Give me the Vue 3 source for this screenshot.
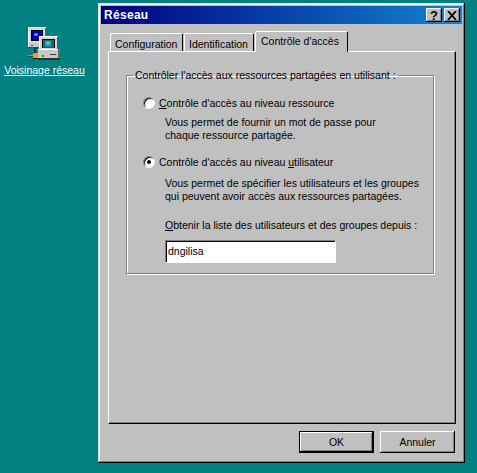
<template>
  <div class="desktop">
    <div class="desk-icon">
      <svg class="net-icon" width="33" height="33" viewBox="0 0 33 33" shape-rendering="crispEdges">
        <!-- back computer -->
        <rect x="0" y="0" width="18" height="16" fill="#d8d8d8" />
        <rect x="0" y="0" width="18" height="1" fill="#fff" />
        <rect x="0" y="0" width="1" height="20" fill="#fff" />
        <rect x="17" y="1" width="1" height="15" fill="#606060" />
        <rect x="3" y="3" width="12" height="11" fill="#000" />
        <rect x="4" y="4" width="10" height="9" fill="#0000b8" />
        <rect x="6" y="6" width="4" height="3" fill="#3060e0" />
        <rect x="7" y="7" width="2" height="1" fill="#b0e0ff" />
        <rect x="1" y="16" width="13" height="4" fill="#c8c8c8" />
        <rect x="3" y="18" width="2" height="1" fill="#00a000" />
        <rect x="0" y="20" width="14" height="1" fill="#404040" />
        <!-- cable -->
        <rect x="6" y="21" width="2" height="6" fill="#303030" />
        <rect x="0" y="28" width="12" height="1" fill="#b09850" />
        <rect x="0" y="29" width="12" height="1" fill="#404040" />
        <rect x="5" y="26" width="5" height="5" fill="#f0a000" />
        <rect x="5" y="31" width="5" height="1" fill="#202020" />
        <!-- front computer -->
        <rect x="11" y="9" width="19" height="13" fill="#d8d8d8" />
        <rect x="11" y="9" width="19" height="1" fill="#fff" />
        <rect x="11" y="9" width="1" height="13" fill="#fff" />
        <rect x="29" y="10" width="1" height="12" fill="#505050" />
        <rect x="14" y="12" width="13" height="9" fill="#000" />
        <rect x="15" y="13" width="11" height="8" fill="#106c74" />
        <rect x="17" y="14" width="6" height="5" fill="#40a0a8" />
        <rect x="19" y="15" width="2" height="2" fill="#80d8d8" />
        <rect x="10" y="22" width="22" height="9" fill="#c8c8c8" />
        <rect x="10" y="22" width="22" height="1" fill="#fff" />
        <rect x="10" y="31" width="22" height="2" fill="#303030" />
        <rect x="30" y="20" width="2" height="11" fill="#686868" />
        <rect x="14" y="28" width="2" height="2" fill="#00c000" />
        <rect x="22" y="27" width="6" height="1" fill="#404040" />
      </svg>
      <span class="desk-label">Voisinage réseau</span>
    </div>

    <div class="window">
      <div class="titlebar">
        <span class="title">Réseau</span>
        <div class="title-btns">
          <button class="title-btn help">?</button>
          <button class="title-btn close">
            <svg width="10" height="9" viewBox="0 0 10 9">
              <path d="M1 0 L9 9 M9 0 L1 9" stroke="#000" stroke-width="1.8" fill="none" />
            </svg>
          </button>
        </div>
      </div>

      <div class="content">
        <div class="tabs">
          <div class="tab tab-config">Configuration</div>
          <div class="tab tab-ident">Identification</div>
          <div class="tab active">Contrôle d'accès</div>
        </div>

        <div class="page">
          <fieldset class="group">
            <legend>Contrôler l'accès aux ressources partagées en utilisant :</legend>

            <label class="radio-row" @click="mode = 'res'">
              <span class="radio" :class="{ on: mode === 'res' }"></span>
              <span><u>C</u>ontrôle d'accès au niveau ressource</span>
            </label>
            <p class="desc">Vous permet de fournir un mot de passe pour<br />chaque ressource partagée.</p>

            <label class="radio-row second" @click="mode = 'user'">
              <span class="radio" :class="{ on: mode === 'user' }"></span>
              <span>Contrôle d'accès au niveau <u>u</u>tilisateur</span>
            </label>
            <p class="desc desc-user">Vous permet de spécifier les utilisateurs et les groupes<br />qui peuvent avoir accès aux ressources partagées.</p>

            <p class="desc source"><u>O</u>btenir la liste des utilisateurs et des groupes depuis :</p>
            <input class="field" v-model="source" />
          </fieldset>
        </div>

        <div class="buttons">
          <button class="btn default">OK</button>
          <button class="btn">Annuler</button>
        </div>
      </div>
    </div>
  </div>
</template>

<script setup>
import { ref } from 'vue'

const mode = ref('user')
const source = ref('dngilisa')
</script>

<style>
html, body {
  margin: 0;
  background: #008080;
  overflow: hidden;
}
</style>

<style scoped>
.desktop {
  position: relative;
  width: 477px;
  height: 473px;
  background: #008080;
  font-family: "Liberation Sans", Arial, sans-serif;
  font-size: 10.5px;
  color: #000;
  overflow: hidden;
}

.desk-icon {
  position: absolute;
  left: 0;
  top: 27px;
  width: 89px;
  display: flex;
  flex-direction: column;
  align-items: center;
}

.desk-label {
  margin-top: 3px;
  color: #fff;
  text-decoration: underline;
  line-height: 14px;
  white-space: nowrap;
}

.window {
  position: absolute;
  left: 98px;
  top: 3px;
  width: 367px;
  height: 460px;
  box-sizing: border-box;
  padding: 3px;
  background: #c0c0c0;
  display: flex;
  flex-direction: column;
  box-shadow: inset -1px -1px 0 #000, inset 1px 1px 0 #dfdfdf, inset -2px -2px 0 #808080, inset 2px 2px 0 #fff;
}

.titlebar {
  height: 18px;
  flex: none;
  display: flex;
  align-items: center;
  justify-content: space-between;
  padding: 0 2px 0 3px;
  background: linear-gradient(to right, #000080, #1084d0);
}

.title {
  color: #fff;
  font-weight: bold;
  font-size: 12px;
  letter-spacing: 0.3px;
}

.title-btns {
  display: flex;
  gap: 2px;
}

.title-btn {
  width: 16px;
  height: 14px;
  padding: 0;
  border: 0;
  background: #c0c0c0;
  display: flex;
  align-items: center;
  justify-content: center;
  font-family: "Liberation Sans", Arial, sans-serif;
  font-weight: bold;
  font-size: 13px;
  color: #000;
  box-shadow: inset -1px -1px 0 #000, inset 1px 1px 0 #fff, inset -2px -2px 0 #808080;
}

.content {
  flex: 1;
  display: flex;
  flex-direction: column;
  padding: 7px 6px 7px 7px;
  min-height: 0;
}

.tabs {
  display: flex;
  align-items: flex-end;
  height: 20px;
  flex: none;
  padding-left: 2px;
  position: relative;
  z-index: 1;
}

.tab {
  height: 18px;
  box-sizing: border-box;
  padding: 3px 3px 0 4px;
  line-height: 14px;
  border-top: 1px solid #fff;
  border-left: 1px solid #fff;
  border-right: 1px solid #000;
  border-radius: 2px 2px 0 0;
  white-space: nowrap;
}

.tab-config {
  width: 73px;
}

.tab-ident {
  width: 70px;
  margin-left: 1px;
}

.tab.active {
  width: 93px;
  height: 21px;
  margin-left: 1px;
  margin-bottom: -1px;
  padding: 2px 3px 0 5px;
  background: #c0c0c0;
}

.page {
  flex: 1;
  box-sizing: border-box;
  padding: 17px 21px 0 17px;
  border-top: 1px solid #fff;
  border-left: 1px solid #fff;
  border-right: 1px solid #000;
  border-bottom: 1px solid #000;
  box-shadow: inset -1px -1px 0 #808080;
}

.group {
  margin: 0;
  height: 205px;
  box-sizing: border-box;
  padding: 14px 0 0 16px;
  border: 1px solid #808080;
  box-shadow: 1px 1px 0 #fff, inset 1px 1px 0 #fff;
  min-width: 0;
}

.group legend {
  padding: 0 2px;
  margin-left: -10px;
  line-height: 13px;
  white-space: nowrap;
}

.radio-row {
  display: flex;
  align-items: center;
  gap: 4px;
  height: 14px;
  white-space: nowrap;
}

.radio-row.second {
  margin-top: 13px;
}

.radio {
  width: 12px;
  height: 12px;
  flex: none;
  box-sizing: border-box;
  border-radius: 50%;
  background: #fff;
  border: 1px solid;
  border-color: #808080 #f4f4f4 #f4f4f4 #808080;
  box-shadow: inset 1px 1px 0 #000;
  display: flex;
  align-items: center;
  justify-content: center;
}

.radio.on::after {
  content: "";
  width: 4px;
  height: 4px;
  border-radius: 50%;
  background: #000;
}

.desc {
  margin: 6px 0 0 22px;
  line-height: 13px;
  white-space: nowrap;
}

.desc.desc-user {
  margin-top: 8px;
}

.desc.source {
  margin-top: 16px;
}

.field {
  display: block;
  width: 170px;
  height: 22px;
  box-sizing: border-box;
  margin: 8px 0 0 22px;
  padding: 0 3px;
  border: 0;
  outline: 0;
  background: #fff;
  font: inherit;
  color: #000;
  box-shadow: inset 1px 1px 0 #808080, inset 2px 2px 0 #000, 1px 1px 0 #fff;
}

.buttons {
  flex: none;
  display: flex;
  justify-content: flex-end;
  gap: 6px;
  padding: 7px 1px 0 0;
}

.btn {
  width: 75px;
  height: 22px;
  padding: 0;
  border: 0;
  background: #c0c0c0;
  font: inherit;
  color: #000;
  box-shadow: inset -1px -1px 0 #000, inset 1px 1px 0 #fff, inset -2px -2px 0 #808080;
}

.btn.default {
  box-shadow: inset 0 0 0 1px #000, inset -2px -2px 0 #000, inset 2px 2px 0 #fff, inset -3px -3px 0 #808080;
}
</style>
